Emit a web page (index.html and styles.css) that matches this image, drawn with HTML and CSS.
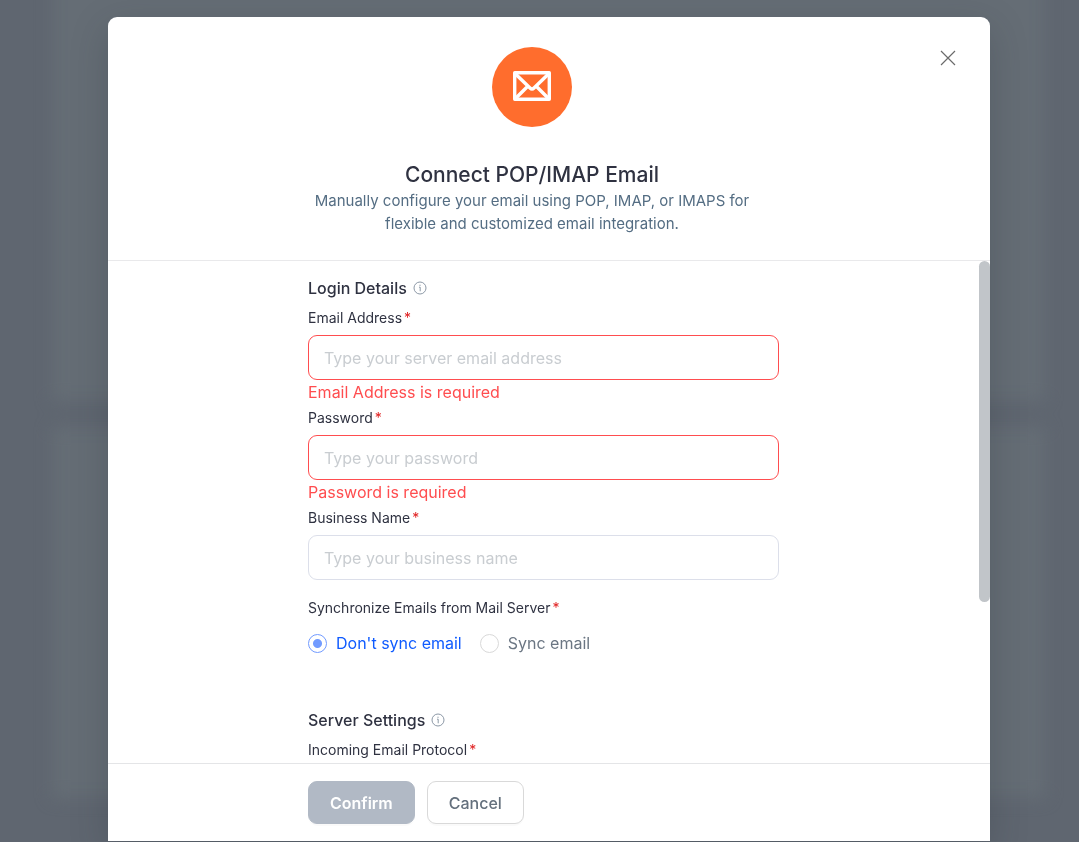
FILE: index.html
```html
<!DOCTYPE html>
<html lang="en">
<head>
    <meta charset="UTF-8">
    <meta name="viewport" content="width=device-width, initial-scale=1.0">
    <title>Connect POP/IMAP Email</title>
    <link rel="stylesheet" href="styles.css">
</head>
<body>
    <!-- Blurred page behind the dialog -->
    <div class="backdrop">
        <div class="panel panel-top"></div>
        <div class="panel panel-bottom"></div>
    </div>

    <div class="overlay">
        <form class="modal" role="dialog" aria-labelledby="modal-title" novalidate>
            <div class="modal-header">
                <button type="button" class="close" aria-label="Close">
                    <svg width="16" height="16" viewBox="0 0 16 16" fill="none" stroke="#6b6b6b" stroke-width="1.2">
                        <path d="M1 1l14 14M15 1L1 15"/>
                    </svg>
                </button>
                <div class="badge">
                    <svg width="40" height="32" viewBox="0 0 40 32" fill="none" stroke="#fff" stroke-width="3.4" stroke-linejoin="round">
                        <rect x="2.7" y="2.7" width="34.600" height="26.600"/>
                        <path d="M3 3.500l15 14.500q2 2 4 0L37 3.500M3 29l12.500-12.500M37 29l-12.500-12.500"/>
                    </svg>
                </div>
                <h1 id="modal-title">Connect POP/IMAP Email</h1>
                <p>Manually configure your email using POP, IMAP, or IMAPS for flexible and customized email integration.</p>
            </div>

            <div class="modal-body">
                <div class="fields">
                    <h2>
                        Login Details
                        <svg class="info" viewBox="0 0 14 14" fill="none" stroke="#8c98a6">
                            <circle cx="7" cy="7" r="6"/>
                            <path d="M6 6.200H7.200V10.300M7 3.700V4.900"/>
                        </svg>
                    </h2>
                    <div class="field">
                        <label for="email">Email Address<span class="required">*</span></label>
                        <input class="text-input invalid" type="email" id="email" placeholder="Type your server email address">
                        <div class="error">Email Address is required</div>
                    </div>
                    <div class="field">
                        <label for="password">Password<span class="required">*</span></label>
                        <input class="text-input invalid" type="password" id="password" placeholder="Type your password">
                        <div class="error">Password is required</div>
                    </div>
                    <div class="field">
                        <label for="business">Business Name<span class="required">*</span></label>
                        <input class="text-input" type="text" id="business" placeholder="Type your business name">
                    </div>
                    <fieldset class="sync">
                        <legend>Synchronize Emails from Mail Server<span class="required">*</span></legend>
                        <div class="options">
                            <label class="option"><input type="radio" name="sync" checked><span>Don't sync email</span></label>
                            <label class="option"><input type="radio" name="sync"><span>Sync email</span></label>
                        </div>
                    </fieldset>
                    <h2>
                        Server Settings
                        <svg class="info" viewBox="0 0 14 14" fill="none" stroke="#8c98a6">
                            <circle cx="7" cy="7" r="6"/>
                            <path d="M6 6.200H7.200V10.300M7 3.700V4.900"/>
                        </svg>
                    </h2>
                    <div class="field">
                        <div class="label">Incoming Email Protocol<span class="required">*</span></div>
                    </div>
                </div>
                <div class="scrollbar"><div class="thumb"></div></div>
            </div>

            <div class="modal-footer">
                <button type="submit" class="btn btn-confirm" disabled>Confirm</button>
                <button type="button" class="btn btn-cancel">Cancel</button>
            </div>
        </form>
    </div>
</body>
</html>
```

FILE: styles.css
```css
* {
    box-sizing: border-box;
}
html, body {
    margin: 0;
    height: 100%;
    overflow: hidden;
    font-family: Inter, "Liberation Sans", sans-serif;
    color: #2f3241;
    background: #5f6670;
}
h1, h2, p {
    margin: 0;
}
button, input {
    font-family: inherit;
}

/* Page behind */
.backdrop {
    position: fixed;
    inset: 0;
    display: flex;
    flex-direction: column;
    gap: 26px;
    padding: 0 34px 44px 52px;
    filter: blur(8px);
}
.panel {
    background: #656d75;
}
.panel-top {
    flex: 17;
    margin-top: -20px;
}
.panel-bottom {
    flex: 15;
}

/* Dialog */
.overlay {
    position: relative;
    display: flex;
    height: 100vh;
    padding: 17px 89px 1px 108px;
}
.modal {
    flex: 1;
    display: flex;
    flex-direction: column;
    background: #fff;
    border-radius: 9px 9px 0 0;
    box-shadow: 0 12px 36px rgba(40, 48, 56, 0.25);
}
.modal-header {
    position: relative;
    display: flex;
    flex-direction: column;
    align-items: center;
    padding: 30px 34px 25px 0;
    border-bottom: 1px solid #e9e9eb;
}
.close {
    position: absolute;
    top: 33px;
    right: 34px;
    display: flex;
    padding: 0;
    border: none;
    background: none;
    cursor: pointer;
}
.badge {
    display: flex;
    align-items: center;
    justify-content: center;
    width: 80px;
    height: 80px;
    margin-bottom: 34px;
    padding-bottom: 2px;
    border-radius: 50%;
    background: #ff6d2d;
}
h1 {
    font-size: 21px;
    font-weight: 500;
    line-height: 28px;
}
.modal-header p {
    max-width: 450px;
    font-size: 15px;
    line-height: 23px;
    text-align: center;
    color: #546d83;
}
.modal-body {
    display: flex;
    flex: 1;
    min-height: 0;
    overflow: hidden;
}
.fields {
    flex: 1;
    padding: 15px 200px 0;
}
h2 {
    display: flex;
    align-items: center;
    gap: 6px;
    margin-bottom: 8px;
    font-size: 16px;
    font-weight: 500;
    line-height: 24px;
}
.info {
    width: 14px;
    height: 14px;
}
.field {
    margin-bottom: 4px;
}
.field label, .label, legend {
    display: block;
    padding: 0;
    font-size: 14px;
    line-height: 20px;
}
.required {
    margin-left: 2px;
    color: #e02020;
}
.text-input {
    display: block;
    width: 100%;
    height: 45px;
    margin-top: 7px;
    padding: 0 15px;
    border: 1px solid #dcdfea;
    border-radius: 9px;
    background: #fff;
    font-size: 16px;
    outline: none;
}
.text-input::placeholder {
    color: #c9cdd1;
}
.text-input.invalid {
    border-color: #ff4d4f;
}
.error {
    font-size: 16px;
    line-height: 24px;
    color: #ff4d4f;
}
.sync {
    margin: 18px 0 53px;
    padding: 0;
    border: none;
}
.options {
    display: flex;
    gap: 18px;
    margin-top: 13px;
}
.option {
    display: flex;
    align-items: center;
    gap: 9px;
    font-size: 16px;
    line-height: 24px;
    color: #6b7683;
}
.option input {
    appearance: none;
    width: 19px;
    height: 19px;
    margin: 0;
    border: 1px solid #d9d9d9;
    border-radius: 50%;
    background: #fff;
}
.option input:checked {
    border-color: #729bff;
    background: radial-gradient(circle, #729bff 4px, #fff 5px);
}
.option input:checked + span {
    color: #0f5bff;
}
.scrollbar {
    width: 11px;
}
.thumb {
    height: 68%;
    border-radius: 6px;
    background: #c1c5c9;
}
.modal-footer {
    display: flex;
    gap: 12px;
    padding: 17px 200px;
    border-top: 1px solid #e4e5e7;
}
.btn {
    height: 43px;
    padding: 0 21px;
    border: 1px solid #d9d9d9;
    border-radius: 9px;
    background: #fff;
    font-size: 16px;
    font-weight: 500;
    color: #64707d;
    box-shadow: 0 2px 0 rgba(0, 0, 0, 0.02);
}
.btn-confirm {
    border-color: #b1b9c5;
    background: #b1b9c5;
    font-weight: 600;
    color: #fff;
}
```
